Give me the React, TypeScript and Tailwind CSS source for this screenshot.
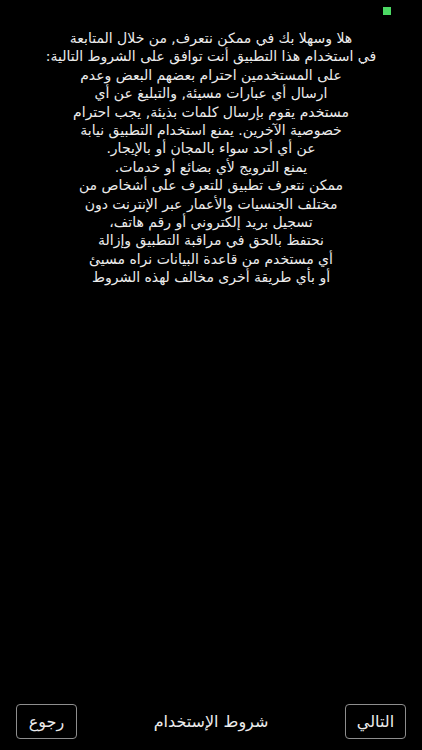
const lines = [
  'هلا وسهلا بك في ممكن نتعرف, من خلال المتابعة',
  'في استخدام هذا التطبيق أنت توافق على الشروط التالية:',
  'على المستخدمين احترام بعضهم البعض وعدم',
  'ارسال أي عبارات مسيئة, والتبليغ عن أي',
  'مستخدم يقوم بإرسال كلمات بذيئة, يجب احترام',
  'خصوصية الآخرين. يمنع استخدام التطبيق نيابة',
  'عن أي أحد سواء بالمجان أو بالإيجار.',
  'يمنع الترويج لأي بضائع أو خدمات.',
  'ممكن نتعرف تطبيق للتعرف على أشخاص من',
  'مختلف الجنسيات والأعمار عبر الإنترنت دون',
  'تسجيل بريد إلكتروني أو رقم هاتف،',
  'نحتفظ بالحق في مراقبة التطبيق وإزالة',
  'أي مستخدم من قاعدة البيانات نراه مسيئ',
  'أو بأي طريقة أخرى مخالف لهذه الشروط',
];

export default function App() {
  return (
    <div
      className="w-[422px] h-[750px] bg-black text-[#ececec] flex flex-col"
      style={{ fontFamily: '"DejaVu Sans", "Liberation Sans", sans-serif' }}
    >
      {/* status dot */}
      <div className="h-[29px] flex justify-end pr-[31px] pt-[7px]">
        <div className="w-[8px] h-[8px] bg-[#4cd964]" />
      </div>

      <div dir="rtl" className="flex flex-col items-center text-[14px] leading-[18.4px]">
        {lines.map((l, i) => (
          <p key={i} className="whitespace-nowrap">{l}</p>
        ))}
      </div>

      <div className="flex-1" />

      {/* bottom bar */}
      <div className="flex items-center justify-between px-[16px] pb-[11px]">
        <button className="w-[61px] h-[35px] border border-[#8e8e8e] rounded-[4px] text-[16px] text-[#ececec]">
          رجوع
        </button>
        <span className="text-[16px] text-[#ececec]">شروط الإستخدام</span>
        <button className="w-[61px] h-[35px] border border-[#8e8e8e] rounded-[4px] text-[16px] text-[#ececec]">
          التالي
        </button>
      </div>
    </div>
  );
}
